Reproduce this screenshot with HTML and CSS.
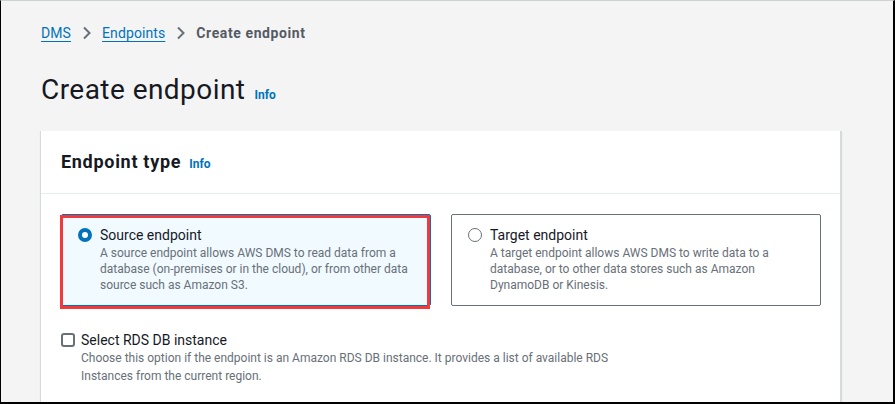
FILE: index.html
```html
<!DOCTYPE html>
<html lang="en">
<head>
<meta charset="utf-8">
<title>Create endpoint</title>
<link rel="stylesheet" href="styles.css">
</head>
<body>
<div class="frame">
  <nav class="crumbs">
    <a class="crumb-link" href="#">DMS</a>
    <svg class="chev" width="9" height="14" viewBox="0 0 9 14"><path d="M2 1.5 L7.5 7 L2 12.5" fill="none" stroke="#687078" stroke-width="2"/></svg>
    <a class="crumb-link" href="#">Endpoints</a>
    <svg class="chev" width="9" height="14" viewBox="0 0 9 14"><path d="M2 1.5 L7.5 7 L2 12.5" fill="none" stroke="#687078" stroke-width="2"/></svg>
    <span class="crumb-current">Create endpoint</span>
  </nav>
  <h1 class="page-title">Create endpoint <a class="info" href="#">Info</a></h1>
  <section class="card">
    <header class="card-head">
      <h2 class="card-title">Endpoint type <a class="info" href="#">Info</a></h2>
    </header>
    <div class="card-body">
      <div class="tiles">
        <div class="tile tile-selected">
          <span class="radio radio-on"></span>
          <div class="tile-text">
            <div class="tile-label">Source endpoint</div>
            <div class="tile-desc">A source endpoint allows AWS DMS to read data from a database (on-premises or in the cloud), or from other data source such as Amazon S3.</div>
          </div>
          <span class="highlight"></span>
        </div>
        <div class="tile">
          <span class="radio"></span>
          <div class="tile-text">
            <div class="tile-label">Target endpoint</div>
            <div class="tile-desc">A target endpoint allows AWS DMS to write data to a database, or to other data stores such as Amazon DynamoDB or Kinesis.</div>
          </div>
        </div>
      </div>
      <div class="check-row">
        <span class="checkbox"></span>
        <div class="check-text">
          <div class="check-label">Select RDS DB instance</div>
          <div class="check-desc">Choose this option if the endpoint is an Amazon RDS DB instance. It provides a list of available RDS Instances from the current region.</div>
        </div>
      </div>
    </div>
  </section>
</div>
</body>
</html>
```
FILE: styles.css
```css
* { box-sizing: border-box; }
html, body { margin: 0; padding: 0; }
body {
  font-family: Roboto, "Liberation Sans", Arial, sans-serif;
  color: #16191f;
  background: #f2f3f3;
}
.frame {
  width: 895px;
  height: 404px;
  overflow: hidden;
  background: #f4f4f4;
  border-left: 1px solid #000;
  border-right: 2px solid #000;
  border-bottom: 2px solid #000;
  border-top: 1px solid #cfd2d2;
  padding: 22px 0 0 40px;
}
.crumbs {
  display: flex;
  align-items: center;
  gap: 11px;
  font-size: 14px;
  line-height: 20px;
  height: 20px;
}
.crumb-link {
  color: #0073bb;
  text-decoration: underline;
  text-underline-offset: 3px;
  letter-spacing: 0.1px;
}
.crumb-current {
  color: #545b64;
  font-weight: 700;
  letter-spacing: 0.6px;
}
.chev { display: block; }
.page-title {
  margin: 0;
  padding-top: 29px;
  font-size: 28px;
  line-height: 36px;
  font-weight: 400;
  letter-spacing: 0.45px;
  display: flex;
  align-items: baseline;
  gap: 9px;
}
.info {
  font-size: 12px;
  font-weight: 700;
  color: #0073bb;
  text-decoration: none;
  letter-spacing: 0;
}
.card {
  margin-top: 18px;
  margin-left: -1px;
  width: 802px;
  background: #fff;
  border-left: 1px solid #d5dbdb;
  border-right: 2px solid #d5dbdb;
  box-shadow: 0 1px 1px rgba(0,28,36,0.1);
  height: 400px;
}
.card-head {
  padding: 20px 20px 0;
  height: 63px;
  border-bottom: 1px solid #eaeded;
}
.card-title {
  margin: 0;
  font-size: 18px;
  line-height: 22px;
  font-weight: 700;
  letter-spacing: 0.7px;
  display: flex;
  align-items: baseline;
  gap: 8px;
}
.card-body {
  padding: 20px 20px 0;
}
.tiles {
  display: grid;
  grid-template-columns: 370px 370px;
  gap: 20px;
}
.tile {
  position: relative;
  display: flex;
  gap: 8px;
  height: 92px;
  padding: 11px 15px 0 16px;
  border: 1px solid #687078;
  border-radius: 2px;
}
.tile-selected {
  background: #f1faff;
  border-color: #0073bb;
}
.radio {
  flex: none;
  width: 14px;
  height: 14px;
  margin-top: 2px;
  border-radius: 50%;
  border: 1px solid #687078;
  background: #fff;
}
.radio-on {
  border: 4px solid #0073bb;
}
.tile-label {
  font-size: 14px;
  line-height: 18px;
}
.tile-desc {
  font-size: 12px;
  line-height: 16px;
  color: #687078;
  margin-top: 1px;
}
.highlight {
  position: absolute;
  left: -2px;
  top: 0;
  width: 370px;
  height: 94px;
  border: 3px solid #f23a3c;
  pointer-events: none;
}
.check-row {
  display: flex;
  gap: 6px;
  margin-top: 25px;
}
.checkbox {
  flex: none;
  width: 14px;
  height: 14px;
  margin-top: 2px;
  border: 2px solid #687078;
  border-radius: 3px;
  background: #fff;
}
.check-label {
  font-size: 14px;
  line-height: 18px;
}
.check-desc {
  font-size: 12px;
  line-height: 18px;
  color: #687078;
  max-width: 580px;
}
```
